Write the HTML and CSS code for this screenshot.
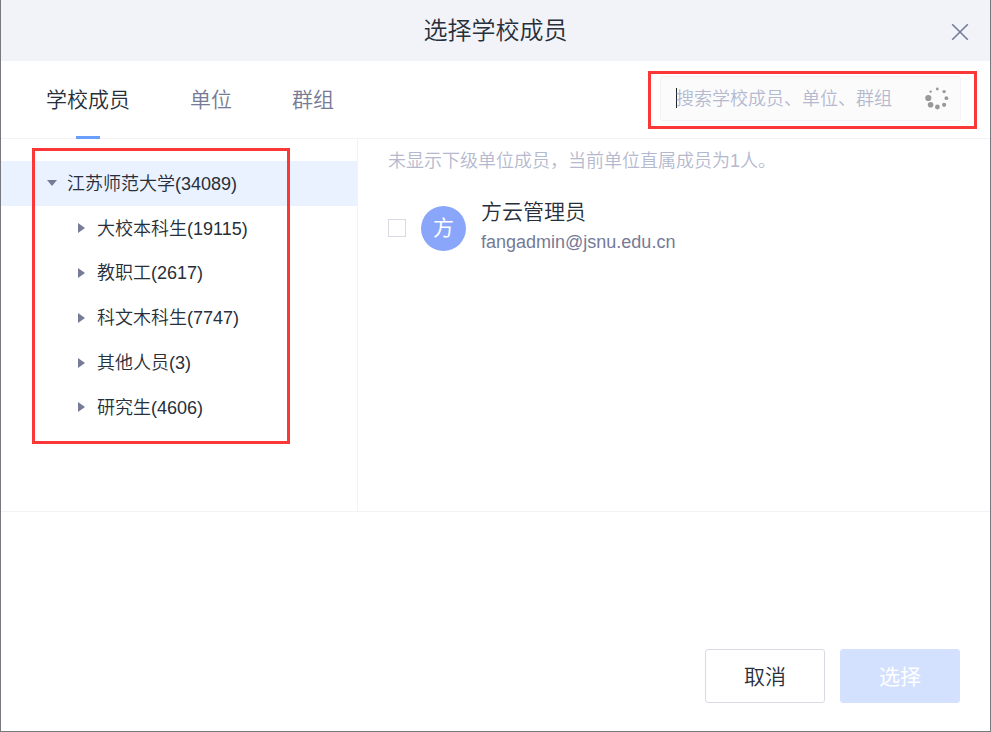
FILE: index.html
```html
<!DOCTYPE html>
<html lang="zh-CN">
<head>
    <meta charset="UTF-8">
    <title>选择学校成员</title>
    <meta name="viewport" content="width=device-width, initial-scale=1">
    <link rel="stylesheet" href="styles.css">
</head>
<body>
<div class="dialog">
    <div class="dialog-header">
        <h1 class="dialog-title">选择学校成员</h1>
        <svg class="dialog-close" viewBox="0 0 18 18">
            <path d="M1.2 1.2l15.6 15.6M16.8 1.2l-15.6 15.6"/>
        </svg>
    </div>

    <div class="toolbar">
        <div class="tabs">
            <div class="tab active">学校成员</div>
            <div class="tab">单位</div>
            <div class="tab">群组</div>
        </div>
        <div class="search">
            <span class="search-caret"></span>
            <span class="search-placeholder">搜索学校成员、单位、群组</span>
            <svg class="search-loading" viewBox="0 0 26 26">
                <circle cx="13.3" cy="4" r="1.4"/>
                <circle cx="20.1" cy="6.6" r="1.7"/>
                <circle cx="22.4" cy="13.2" r="1.9"/>
                <circle cx="20.1" cy="19.8" r="2.1"/>
                <circle cx="13.4" cy="22" r="2.4"/>
                <circle cx="6.6" cy="19.8" r="2.8"/>
                <circle cx="4.3" cy="13" r="3.1"/>
                <circle cx="6.6" cy="6.6" r="1.2"/>
            </svg>
        </div>
    </div>

    <div class="dialog-body">
        <div class="tree">
            <div class="tree-node root"><span class="arrow open"></span>江苏师范大学(34089)</div>
            <div class="tree-node"><span class="arrow"></span>大校本科生(19115)</div>
            <div class="tree-node"><span class="arrow"></span>教职工(2617)</div>
            <div class="tree-node"><span class="arrow"></span>科文木科生(7747)</div>
            <div class="tree-node"><span class="arrow"></span>其他人员(3)</div>
            <div class="tree-node"><span class="arrow"></span>研究生(4606)</div>
        </div>
        <div class="members">
            <p class="members-tip">未显示下级单位成员，当前单位直属成员为1人。</p>
            <div class="member">
                <span class="checkbox"></span>
                <span class="avatar">方</span>
                <div class="member-info">
                    <div class="member-name">方云管理员</div>
                    <div class="member-mail">fangadmin@jsnu.edu.cn</div>
                </div>
            </div>
        </div>
    </div>

    <div class="dialog-footer">
        <button class="btn">取消</button>
        <button class="btn btn-primary">选择</button>
    </div>

    <div class="mark mark-search"></div>
    <div class="mark mark-tree"></div>
</div>
</body>
</html>
```
FILE: styles.css
```css
* {
    box-sizing: border-box;
    margin: 0;
}

body {
    background: #fff;
    font-family: "Liberation Sans", "Noto Sans CJK SC", sans-serif;
    font-weight: 350;
    color: #262f3a;
}

.dialog {
    position: relative;
    display: flex;
    flex-direction: column;
    width: 991px;
    height: 732px;
    border: 1px solid #77797e;
    border-top: 0;
    overflow: hidden;
}

/* header */

.dialog-header {
    display: flex;
    align-items: center;
    height: 61px;
    padding-right: 21px;
    background: #f2f3f9;
}

.dialog-title {
    flex: 1;
    padding-left: 39px;
    font-size: 24px;
    font-weight: inherit;
    line-height: 60px;
    text-align: center;
}

.dialog-close {
    width: 18px;
    height: 18px;
    margin-top: 3px;
    fill: none;
    stroke: #747c98;
    stroke-width: 1.6;
}

/* tabs and search */

.toolbar {
    display: flex;
    justify-content: space-between;
    height: 78px;
    padding: 0 29px 0 45px;
    border-bottom: 1px solid #f2f3f5;
}

.tabs {
    display: flex;
    gap: 60px;
}

.tab {
    display: flex;
    flex-direction: column;
    align-items: center;
    height: 78px;
    font-size: 21px;
    line-height: 77px;
    color: #757a96;
}

.tab.active {
    color: #262f3a;
}

.tab.active:after {
    content: "";
    width: 24px;
    height: 3px;
    margin-top: -2px;
    flex-shrink: 0;
    background: #6b9fff;
}

.search {
    display: flex;
    align-items: center;
    width: 301px;
    height: 45px;
    margin-top: 15px;
    padding: 0 10px 2px 15px;
    border: 1px solid #f3f3f5;
    border-radius: 3px;
    background: #fbfbfb;
}

.search-caret {
    width: 1px;
    height: 20px;
    background: #222;
}

.search-placeholder {
    flex: 1;
    margin-left: -1px;
    padding-bottom: 1px;
    font-size: 18px;
    color: #b4b9cf;
}

.search-loading {
    width: 26px;
    height: 26px;
    fill: #999;
}

/* content */

.dialog-body {
    display: flex;
    height: 373px;
    border-bottom: 1px solid #f2f3f5;
}

.tree {
    width: 357px;
    padding-top: 22px;
    border-right: 1px solid #f2f3f5;
}

.tree-node {
    display: flex;
    align-items: center;
    height: 44.8px;
    padding: 0 0 3px 77px;
    font-size: 18px;
}

.tree-node.root {
    padding-left: 46px;
    background: #eaf1ff;
}

.arrow {
    margin: 3px 12px 0 0;
    border-left: 7px solid #767b98;
    border-top: 5.5px solid transparent;
    border-bottom: 5.5px solid transparent;
}

.arrow.open {
    margin-right: 10px;
    border-top: 6.5px solid #767b98;
    border-left: 5.5px solid transparent;
    border-right: 5.5px solid transparent;
    border-bottom: 0;
}

.members {
    flex: 1;
    padding: 8px 30px;
}

.members-tip {
    font-size: 18px;
    line-height: 28px;
    color: #b4b9cf;
}

.member {
    display: flex;
    align-items: center;
    margin-top: 22px;
}

.checkbox {
    width: 18px;
    height: 18px;
    border: 1px solid #d9dbe4;
}

.avatar {
    width: 45px;
    height: 45px;
    margin: 2px 15px 0;
    border-radius: 50%;
    background: #8aa6fa;
    font-size: 21px;
    font-weight: 400;
    line-height: 44px;
    text-align: center;
    color: #fff;
}

.member-info {
    padding-bottom: 2px;
    margin-top: -1px;
}

.member-name {
    font-size: 21px;
    line-height: 32px;
}

.member-mail {
    font-size: 18px;
    line-height: 28px;
    color: #757a96;
}

/* footer */

.dialog-footer {
    display: flex;
    flex: 1;
    align-items: flex-end;
    justify-content: flex-end;
    gap: 15px;
    padding: 0 30px 28px;
}

.btn {
    width: 120px;
    height: 54px;
    padding-bottom: 3px;
    border: 1px solid #d9dbe4;
    border-radius: 3px;
    background: #fff;
    font-family: inherit;
    font-size: 21px;
    font-weight: inherit;
    color: #262f3a;
}

.btn-primary {
    border-color: #d3e1ff;
    background: #d3e1ff;
    font-weight: 400;
    color: #fff;
}

/* highlight frames */

.mark {
    position: absolute;
    border: 3px solid #fb3838;
}

.mark-search {
    left: 647px;
    top: 71px;
    width: 329px;
    height: 58px;
}

.mark-tree {
    left: 31px;
    top: 148px;
    width: 258px;
    height: 296px;
}
```
